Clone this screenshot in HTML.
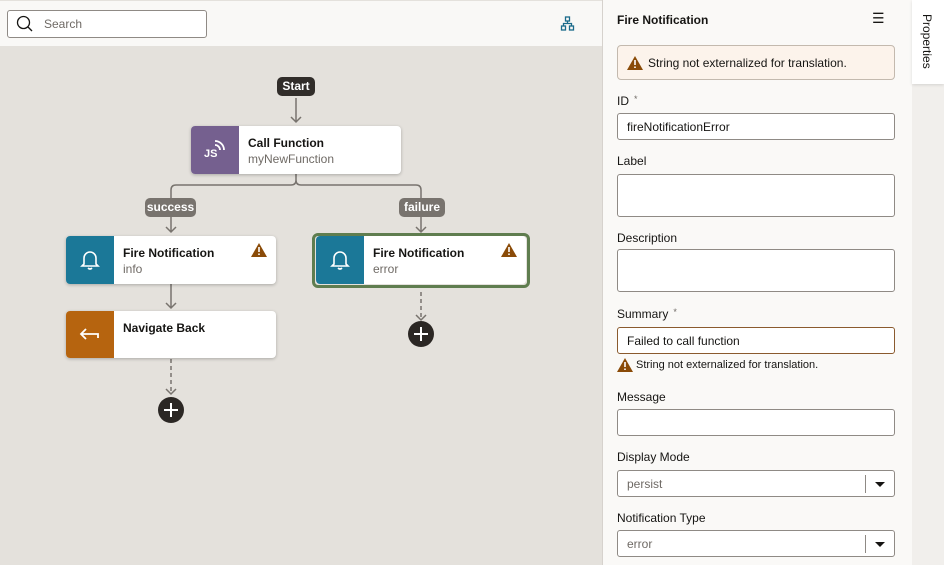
<!DOCTYPE html>
<html><head><meta charset="utf-8"><style>
*{box-sizing:border-box;margin:0;padding:0}
body{width:944px;height:565px;overflow:hidden;font-family:"Liberation Sans",sans-serif;background:#e4e1dc;position:relative;color:#161513}
.abs{position:absolute}
.tb{left:0;top:0;width:602px;height:46px;background:#f9f8f6;border-top:1px solid #e4e1dc}
.search{left:7px;top:10px;width:200px;height:28px;border:1px solid #8f8a85;border-radius:3px;background:#fff}
.node{position:absolute;width:210px;height:48px;background:#fff;border-radius:4px;box-shadow:0 1px 3px rgba(0,0,0,.25);overflow:hidden}
.node .ic{position:absolute;left:0;top:0;width:48px;height:48px}
.node .t{position:absolute;left:57px;top:10px;font-size:12px;font-weight:bold;color:#161513}
.node .s{position:absolute;left:57px;top:26px;font-size:12px;color:#6f6a65}
.lbl{position:absolute;height:19px;border-radius:5px;color:#fff;font-size:12px;font-weight:bold;text-align:center;line-height:19px}
.panel{left:602px;top:0;width:310px;height:565px;background:#faf9f7;border-left:1px solid #d6d2cd}
.fl{position:absolute;left:14px;font-size:12px;color:#161513}
.in{position:absolute;left:14px;width:278px;height:27px;background:#fff;border:1px solid #8f8a85;border-radius:3px;font-size:12px;line-height:27px;padding-left:9px}
.sel{color:#6f6a65}
.sel:after{content:"";position:absolute;right:28px;top:4px;width:1px;height:18px;background:#8f8a85}
.sel b{position:absolute;right:9px;top:11px;border:5px solid transparent;border-top:5px solid #161513;border-bottom:0}
.star{font-size:9px;vertical-align:top;margin-left:5px;color:#6f6a65}
</style></head><body>
<div class="abs tb"></div>
<div class="abs search"><svg class="abs" style="left:8px;top:4px" width="18" height="18" viewBox="0 0 18 18"><circle cx="7.5" cy="7.5" r="6" fill="none" stroke="#161513" stroke-width="1.3"/><line x1="12" y1="12" x2="16" y2="16" stroke="#161513" stroke-width="1.3"/></svg><span class="abs" style="left:36px;top:6px;font-size:12px;color:#6f6a65">Search</span></div>
<svg class="abs" style="left:560px;top:16px" width="16" height="16" viewBox="0 0 16 16"><g fill="none" stroke="#1a6a8a" stroke-width="1.3"><rect x="5.5" y="1" width="4" height="4"/><rect x="1.5" y="10" width="4" height="4"/><rect x="9.5" y="10" width="4" height="4"/><path d="M7.5 5v2.5M3.5 10V7.5h8V10"/></g></svg>

<svg class="abs" style="left:0;top:46px" width="602" height="519">
<g stroke="#78736e" stroke-width="1.5" fill="none">
<path d="M296 52v24M291 71l5 5 5-5"/>
<path d="M296 128v6q0 5-5 5H176q-5 0-5 5v8M296 134q0 5 5 5h115q5 0 5 5v8"/>
<path d="M171 171v15M166 181l5 5 5-5M421 171v15M416 181l5 5 5-5"/>
<path d="M171 238v24M166 257l5 5 5-5"/>
<path d="M171 313v35M421 246v28" stroke-dasharray="4 3"/>
<path d="M166 343l5 5 5-5M416 269l5 5 5-5"/>
</g>
<circle cx="171" cy="364" r="13" fill="#2b2724"/><path d="M171 357v14M164 364h14" stroke="#fff" stroke-width="2"/>
<circle cx="421" cy="288" r="13" fill="#2b2724"/><path d="M421 281v14M414 288h14" stroke="#fff" stroke-width="2"/>
</svg>
<div class="lbl" style="left:277px;top:77px;width:38px;background:#312d2a">Start</div>
<div class="lbl" style="left:145px;top:198px;width:51px;background:#78736e">success</div>
<div class="lbl" style="left:399px;top:198px;width:46px;background:#78736e">failure</div>

<div class="node" style="left:191px;top:126px"><div class="ic" style="background:#75608f"><span class="abs" style="left:13px;top:22px;color:#fff;font-weight:bold;font-size:11px">JS</span><svg class="abs" style="left:22px;top:12px" width="14" height="14" viewBox="0 0 14 14"><path d="M2 7a5 5 0 0 1 5 5M2 3a9 9 0 0 1 9 9" stroke="#fff" stroke-width="1.8" fill="none"/></svg></div><div class="t">Call Function</div><div class="s">myNewFunction</div></div>

<div class="node" style="left:66px;top:236px"><div class="ic" style="background:#1b7898"><svg class="abs" style="left:14px;top:13px" width="20" height="22" viewBox="0 0 20 22"><path d="M4 15V9a6 6 0 0 1 12 0v6l2 2H2z M8 19q2 2 4 0" fill="none" stroke="#fff" stroke-width="1.6"/></svg></div><div class="t">Fire Notification</div><div class="s">info</div><svg class="abs" style="left:185px;top:7px" width="16" height="14" viewBox="0 0 16 14"><path d="M8 0L16 14H0z" fill="#8a4b08"/><path d="M8 4v5M8 10.5v1.5" stroke="#fff" stroke-width="1.6"/></svg></div>

<div class="abs" style="left:312px;top:233px;width:218px;height:55px;border:3px solid #5f7d4f;border-radius:6px"></div>
<div class="node" style="left:316px;top:236px;box-shadow:none"><div class="ic" style="background:#1b7898"><svg class="abs" style="left:14px;top:13px" width="20" height="22" viewBox="0 0 20 22"><path d="M4 15V9a6 6 0 0 1 12 0v6l2 2H2z M8 19q2 2 4 0" fill="none" stroke="#fff" stroke-width="1.6"/></svg></div><div class="t">Fire Notification</div><div class="s">error</div><svg class="abs" style="left:185px;top:7px" width="16" height="14" viewBox="0 0 16 14"><path d="M8 0L16 14H0z" fill="#8a4b08"/><path d="M8 4v5M8 10.5v1.5" stroke="#fff" stroke-width="1.6"/></svg></div>

<div class="node" style="left:66px;top:311px;height:47px"><div class="ic" style="background:#b6640f;height:47px"><svg class="abs" style="left:13px;top:16px" width="22" height="14" viewBox="0 0 22 14"><path d="M7 2L2 7l5 5M2 7h17v4" fill="none" stroke="#fff" stroke-width="1.8"/></svg></div><div class="t">Navigate Back</div></div>

<div class="abs panel">
<div class="abs" style="left:14px;top:13px;font-size:12px;font-weight:bold">Fire Notification</div>
<div class="abs" style="left:269px;top:10px;font-size:14px">☰</div>
<div class="abs" style="left:14px;top:45px;width:278px;height:35px;background:#fcf3eb;border:1px solid #c3b9ae;border-radius:4px"><svg class="abs" style="left:9px;top:10px" width="16" height="14" viewBox="0 0 16 14"><path d="M8 0L16 14H0z" fill="#8a4b08"/><path d="M8 4v5M8 10.5v1.5" stroke="#fff" stroke-width="1.6"/></svg><span class="abs" style="left:30px;top:10px;font-size:12px">String not externalized for translation.</span></div>
<div class="fl" style="top:94px">ID<span class="star">*</span></div>
<div class="in" style="top:113px">fireNotificationError</div>
<div class="fl" style="top:154px">Label</div>
<div class="in" style="top:174px;height:43px"></div>
<div class="fl" style="top:231px">Description</div>
<div class="in" style="top:249px;height:43px"></div>
<div class="fl" style="top:307px">Summary<span class="star">*</span></div>
<div class="in" style="top:327px;border-color:#8a5a2e">Failed to call function</div>
<svg class="abs" style="left:14px;top:358px" width="16" height="14" viewBox="0 0 16 14"><path d="M8 0L16 14H0z" fill="#8a4b08"/><path d="M8 4v5M8 10.5v1.5" stroke="#fff" stroke-width="1.6"/></svg>
<div class="abs" style="left:33px;top:359px;font-size:11px">String not externalized for translation.</div>
<div class="fl" style="top:390px">Message</div>
<div class="in" style="top:409px"></div>
<div class="fl" style="top:450px">Display Mode</div>
<div class="in sel" style="top:470px">persist<b></b></div>
<div class="fl" style="top:511px">Notification Type</div>
<div class="in sel" style="top:530px">error<b></b></div>
</div>
<div class="abs" style="left:912px;top:0;width:32px;height:565px;background:#f1efec"></div>
<div class="abs" style="left:912px;top:0;width:32px;height:84px;background:#fff;box-shadow:0 1px 3px rgba(0,0,0,.12)"><div class="abs" style="left:8px;top:14px;font-size:12px;writing-mode:vertical-rl;color:#161513">Properties</div></div>
</body></html>
